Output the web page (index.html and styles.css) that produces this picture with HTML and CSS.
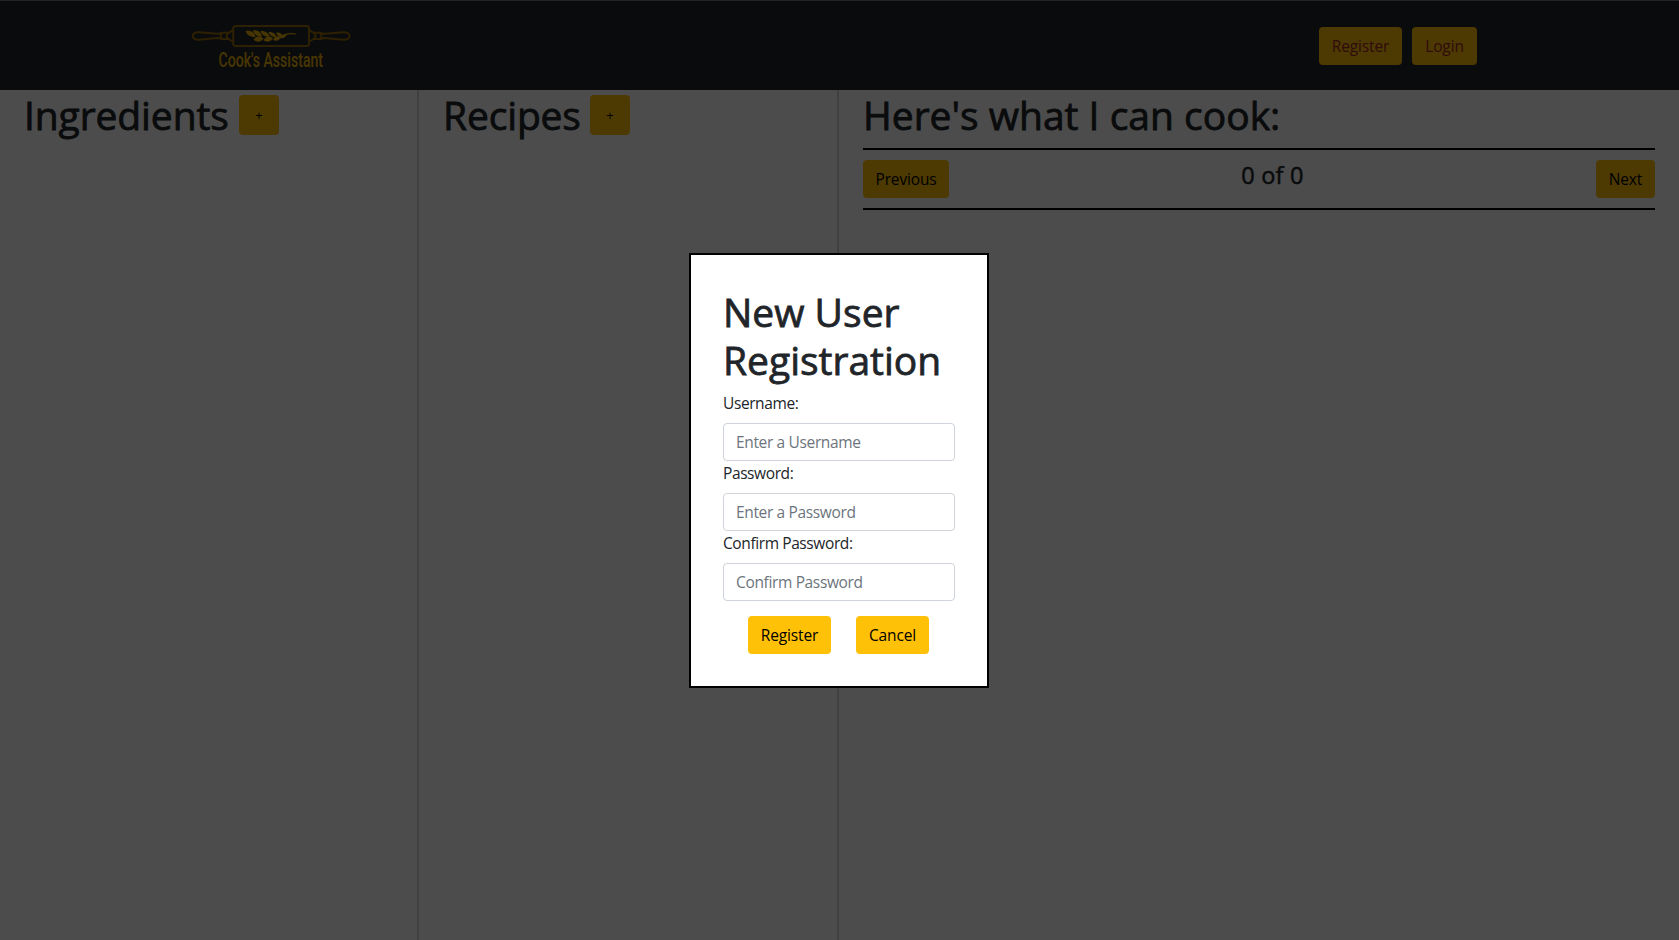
FILE: index.html
```html
<!DOCTYPE html>
<html lang="en">
<head>
<meta charset="utf-8">
<title>Cook's Assistant</title>
<link rel="stylesheet" href="styles.css">
</head>
<body>
<header class="navbar">
  <svg class="logo" width="162" height="60" viewBox="10 8 162 60" role="img" aria-label="Cook's Assistant">
    <g class="pin">
      <rect x="53.2" y="15.9" width="75.8" height="20" rx="2.5"/>
      <path id="handle" d="M53 20.500c-2.500 0-2.500 2-4.500 2.300h-6.500c-1.500 0-2 1-4 1L19 22.200c-8.500-.5-8.500 8 0 7.500L38 28c2 0 2.500 1 4 1h6.500c2 .3 2 2.300 4.500 2.300M42 23q-2.500 3 0 6M48.500 23q-4 3 0 6"/>
      <use href="#handle" transform="matrix(-1 0 0 1 182.200 0)"/>
    </g>
    <g class="wheat">
      <path d="M65.500 21c5-1 9 .8 10 6-5.500.2-8.500-2-10-6zM73 20.200c5-.4 8.500 2 9 6.600-5-.3-8-2.500-9-6.600zM80.500 21c5-.4 8.300 2 9 6-5-.2-8-2.200-9-6zM88.500 22c4-.4 7.200 1.500 8 5-4.500 0-7-1.800-8-5zM96 22.500c3.500-.4 6.300 1 7 4.500-4 0-6.200-1.500-7-4.500z"/>
      <path d="M73.500 29.500c3-4 7-3.500 10-1-2.500 4-7 4-10 1zM83.500 30.500c2-4.500 6-5 9.500-2.500-2 4-6 4.500-9.500 2.500zM93 30c1.500-4 4.500-4.500 8-3-1.500 3.500-4.500 4.500-8 3zM100 28c1-3 3.500-4 7-4-1 3-3.500 5-7 4zM103 24.500q7-2.300 13-1v1q-6-1-13 1z"/>
    </g>
    <text class="brand" x="38.500" y="57" textLength="104.500" lengthAdjust="spacingAndGlyphs">Cook's Assistant</text>
  </svg>
  <nav class="account">
    <button class="btn login-btn">Register</button>
    <button class="btn login-btn login-narrow">Login</button>
  </nav>
</header>
<main class="columns">
  <section class="column">
    <div class="title-row"><h1 class="title w-ingredients">Ingredients</h1><button class="btn add">+</button></div>
  </section>
  <section class="column">
    <div class="title-row"><h1 class="title w-recipes">Recipes</h1><button class="btn add">+</button></div>
  </section>
  <section class="column results">
    <div class="title-row"><h1 class="title w-cook">Here's what I can cook:</h1></div>
    <div class="pager">
      <button class="btn prev">Previous</button>
      <h4 class="count">0 of 0</h4>
      <button class="btn next">Next</button>
    </div>
  </section>
</main>
<div class="overlay">
  <form class="modal">
    <h1 class="title modal-title">New User<br>Registration</h1>
    <label class="label" for="user">Username:</label>
    <input class="input" id="user" type="text" placeholder="Enter a Username">
    <label class="label" for="pass">Password:</label>
    <input class="input" id="pass" type="password" placeholder="Enter a Password">
    <label class="label" for="confirm">Confirm Password:</label>
    <input class="input" id="confirm" type="password" placeholder="Confirm Password">
    <div class="actions">
      <button class="btn register" type="button">Register</button>
      <button class="btn cancel" type="button">Cancel</button>
    </div>
  </form>
</div>
</body>
</html>
```
FILE: styles.css
```css
* { box-sizing: border-box; }
body {
  margin: 0;
  height: 940px;
  overflow: hidden;
  display: flex;
  flex-direction: column;
  background: #fff;
  color: #212529;
  font: 400 15.500px/24px "Open Sans", "Noto Sans", sans-serif;
}
.navbar {
  height: 90px;
  flex: none;
  padding: 2px 202px 0 190px;
  display: flex;
  align-items: center;
  justify-content: space-between;
  background: #212529;
}
.logo { margin-top: 4px; overflow: visible; }
.pin { fill: none; stroke: #996b08; stroke-width: 2; }
.wheat { fill: #f0b607; }
.brand { fill: #f0b607; font: 500 21px Roboto, sans-serif; }
.account { display: flex; gap: 10px; }
.btn {
  height: 38px;
  padding: 0;
  border: 0;
  border-radius: 4px;
  background: #ffc107;
  color: #000;
  font: inherit;
  letter-spacing: -0.15px;
  white-space: nowrap;
}
.login-btn { width: 83px; color: #a52a2a; }
.login-narrow { width: 65px; }
.columns {
  flex: 1;
  display: grid;
  grid-template-columns: 419px 420px 1fr;
}
.column { padding: 0 24px; border-right: 2px solid #d5d5d5; }
.results { border: 0; }
.title-row { display: flex; align-items: center; height: 50px; }
.title {
  margin: 0;
  font-size: 39px;
  line-height: 48px;
  font-weight: 500;
  -webkit-text-stroke: 0.8px currentColor;
  white-space: nowrap;
}
.w-ingredients { width: 215px; letter-spacing: -0.1px; }
.w-recipes { width: 147px; letter-spacing: -0.15px; }
.add { width: 40px; height: 40px; font-size: 13px; }
.pager {
  margin-top: 8px;
  height: 62px;
  padding-top: 10px;
  display: flex;
  justify-content: space-between;
  border: solid #000;
  border-width: 2px 0;
}
.prev { width: 86px; }
.next { width: 59px; }
.count {
  margin: 1px 0 0;
  font-size: 23.500px;
  line-height: 29px;
  font-weight: 500;
  letter-spacing: 0.2px;
  -webkit-text-stroke: 0.5px currentColor;
}
.overlay {
  position: absolute;
  inset: 1px 0 0;
  display: flex;
  align-items: center;
  justify-content: center;
  padding-right: 1px;
  background: rgba(0, 0, 0, 0.7);
}
.modal {
  width: 300px;
  height: 435px;
  padding: 32px;
  display: flex;
  flex-direction: column;
  border: 2px solid #000;
  background: #fff;
}
.modal-title { padding-top: 1px; margin-bottom: 7px; }
.label { margin-bottom: 8px; letter-spacing: -0.4px; }
.input {
  height: 38px;
  padding: 0 12px;
  border: 1px solid #ced4da;
  border-radius: 4px;
  background: #fff;
  font: inherit;
  letter-spacing: -0.35px;
}
.input::placeholder { color: #6c757d; opacity: 1; }
.actions { display: flex; gap: 25px; margin: 15px 0 0 25px; }
.register { width: 83px; }
.cancel { width: 73px; }
```
